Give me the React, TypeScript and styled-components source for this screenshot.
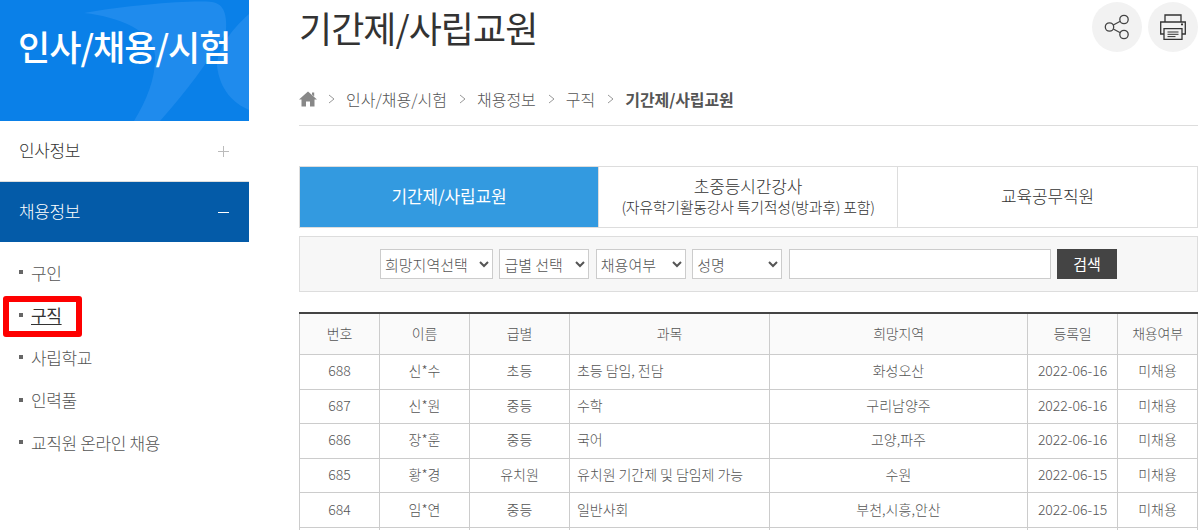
import React from 'react'
import styled, { createGlobalStyle } from 'styled-components'

const GlobalStyle = createGlobalStyle`
  html, body {
    margin: 0;
    padding: 0;
    height: 530px;
    overflow: hidden;
    background: #fff;
  }
  body, select, input, button, table {
    font-family: "Noto Sans CJK KR", "Noto Sans", sans-serif;
  }
`

const Page = styled.div`
  display: flex;
  width: 1204px;
  height: 530px;
  overflow: hidden;
`

const Sidebar = styled.aside`
  position: relative;
  width: 249px;
  flex-shrink: 0;
  margin-right: 50px;
`

const SideHeader = styled.div`
  position: relative;
  height: 121px;
  background: #0a80e8;
  overflow: hidden;
  color: #fff;
  padding: 21px 0 0 18px;
  box-sizing: border-box;
`

const SideSwoosh = styled.svg`
  position: absolute;
  inset: 0;
`

const SideTitle = styled.h2`
  position: relative;
  margin: 0;
  font-size: 35px;
  line-height: 50px;
  font-weight: 500;
  letter-spacing: -1px;
  white-space: nowrap;
`

const MenuItem = styled.div<{ $active?: boolean }>`
  display: flex;
  align-items: center;
  justify-content: space-between;
  box-sizing: border-box;
  height: ${p => (p.$active ? '60px' : '61px')};
  padding: 0 20px 3px 19px;
  font-size: 17px;
  font-weight: 300;
  letter-spacing: -0.4px;
  color: ${p => (p.$active ? '#fff' : '#333')};
  background: ${p => (p.$active ? '#045ba8' : '#fff')};
  border-bottom: ${p => (p.$active ? 'none' : '1px solid #ddd')};

  svg {
    margin-top: 3px;
  }
`

const MenuIcon = styled.svg`
  flex-shrink: 0;
`

const SubList = styled.ul`
  list-style: none;
  margin: 0;
  padding: 9px 0 0 19px;
`

const SubItem = styled.li<{ $current?: boolean }>`
  display: flex;
  align-items: center;
  gap: 8px;
  height: 42.5px;
  font-size: 17px;
  font-weight: ${p => (p.$current ? 400 : 300)};
  letter-spacing: -0.35px;
  color: ${p => (p.$current ? '#333' : '#555')};

  &::before {
    content: '';
    width: 4px;
    height: 4px;
    background: #666;
    flex-shrink: 0;
  }

  span {
    text-decoration: ${p => (p.$current ? 'underline' : 'none')};
    text-underline-offset: 2px;
  }
`

const Highlight = styled.div`
  position: absolute;
  left: 3px;
  top: 296px;
  width: 79px;
  height: 41px;
  box-sizing: border-box;
  border: 6px solid #fe0000;
  border-radius: 3px;
`

const Main = styled.main`
  width: 899px;
  flex-shrink: 0;
`

const TitleRow = styled.div`
  display: flex;
  justify-content: space-between;
  height: 76px;
`

const PageTitle = styled.h1`
  margin: 0;
  font-size: 36px;
  line-height: 54px;
  font-weight: 400;
  letter-spacing: -0.95px;
  color: #333;
`

const RoundButtons = styled.div`
  display: flex;
  gap: 6px;
  padding-top: 2px;
`

const RoundButton = styled.button`
  width: 50px;
  height: 50px;
  border: 0;
  padding: 0;
  border-radius: 50%;
  background: #f2f2f2;
  display: flex;
  align-items: center;
  justify-content: center;
`

const Breadcrumb = styled.nav`
  display: flex;
  align-items: center;
  height: 50px;
  box-sizing: border-box;
  padding-bottom: 3px;
  border-bottom: 1px solid #ddd;
  font-size: 16px;
  font-weight: 300;
  color: #555;
  margin-bottom: 40px;
`

const HomeIcon = styled.svg`
  margin-right: -1px;
  flex-shrink: 0;
`

const Crumb = styled.span<{ $current?: boolean }>`
  font-weight: ${p => (p.$current ? 700 : 300)};
  letter-spacing: ${p => (p.$current ? '-0.1px' : '0')};
  color: #555;
`

const CrumbArrow = styled.svg`
  margin: 0 11px 0 12px;
  flex-shrink: 0;
`

const Tabs = styled.div`
  display: grid;
  grid-template-columns: 298px 299px 1fr;
  height: 62px;
  box-sizing: border-box;
  border: 1px solid #ddd;
  margin-bottom: 8px;
`

const Tab = styled.div<{ $active?: boolean }>`
  display: flex;
  flex-direction: column;
  align-items: center;
  justify-content: center;
  box-sizing: border-box;
  padding-bottom: 2px;
  text-align: center;
  font-size: 17px;
  font-weight: ${p => (p.$active ? 400 : 300)};
  line-height: 22px;
  letter-spacing: -0.15px;
  color: ${p => (p.$active ? '#fff' : '#333')};
  background: ${p => (p.$active ? '#339ae0' : '#fff')};
  border-left: ${p => (p.$active ? '0' : '1px solid #ddd')};

  small {
    font-size: 15px;
    letter-spacing: -0.3px;
    line-height: 20px;
  }
`

const SearchBar = styled.form`
  display: flex;
  align-items: center;
  justify-content: center;
  gap: 6.4px;
  height: 56px;
  box-sizing: border-box;
  border: 1px solid #ddd;
  background: #f7f7f7;
  margin: 0 0 20px;
`

const Select = styled.select<{ $width: number }>`
  width: ${p => p.$width}px;
  height: 30px;
  box-sizing: border-box;
  border: 1px solid #ccc;
  border-radius: 0;
  background: #fff;
  color: #555;
  font-size: 15px;
  font-weight: 300;
  padding: 0;
`

const SearchInput = styled.input`
  width: 262px;
  height: 30px;
  box-sizing: border-box;
  border: 1px solid #ccc;
  background: #fff;
`

const SearchButton = styled.button`
  width: 60px;
  height: 30px;
  border: 0;
  background: #444;
  color: #fff;
  font-size: 15px;
  padding: 0 0 2px;
`

const Table = styled.table`
  width: 899px;
  table-layout: fixed;
  border-collapse: collapse;
  border-top: 2px solid #444;
  font-size: 14px;
  font-weight: 300;
  color: #555;

  th, td {
    border: 1px solid #ccc;
    text-align: center;
    padding: 0 0 3px;
  }

  thead tr:first-child th {
    border-top: 0;
  }

  th {
    height: 37px;
    font-weight: 300;
    background: #fafafa;
    letter-spacing: -0.2px;
  }

  td {
    height: 30.6px;
  }
`

const SubjectCell = styled.td`
  && {
    text-align: left;
    padding-left: 7px;
    letter-spacing: -0.05px;
  }
`

const columns = [80, 90, 100, 200, 258, 90, 80]
const headers = ['번호', '이름', '급별', '과목', '희망지역', '등록일', '채용여부']
const rows = [
  ['688', '신*수', '초등', '초등 담임, 전담', '화성오산', '2022-06-16', '미채용'],
  ['687', '신*원', '중등', '수학', '구리남양주', '2022-06-16', '미채용'],
  ['686', '장*훈', '중등', '국어', '고양,파주', '2022-06-16', '미채용'],
  ['685', '황*경', '유치원', '유치원 기간제 및 담임제 가능', '수원', '2022-06-15', '미채용'],
  ['684', '임*연', '중등', '일반사회', '부천,시흥,안산', '2022-06-15', '미채용'],
  ['', '', '', '', '', '', ''],
]

function Arrow() {
  return (
    <CrumbArrow width="7" height="10" viewBox="0 0 7 10" fill="none">
      <path d="M1 1l5 4-5 4" stroke="#999" strokeWidth="1" />
    </CrumbArrow>
  )
}

export default function App() {
  return (
    <Page>
      <GlobalStyle />
      <Sidebar>
        <SideHeader>
          <SideSwoosh width="249" height="121" viewBox="0 0 249 121">
            <path
              d="M84 13C130 5 190 0 212 2c13 2 15 14 14 30-18 30-40 60-66 89h-26c12-20 22-42 21-66-2-24-35-38-71-42z"
              fill="#1f8bed"
            />
            <path d="M249 14c-20 18-32 36-32 52 3 24 16 37 32 44z" fill="#1f8bed" />
          </SideSwoosh>
          <SideTitle>인사/채용/시험</SideTitle>
        </SideHeader>
        <MenuItem>
          인사정보
          <MenuIcon width="11" height="11" viewBox="0 0 11 11">
            <path d="M5.5 0v11M0 5.5h11" stroke="#bbb" strokeWidth="1" />
          </MenuIcon>
        </MenuItem>
        <MenuItem $active>
          채용정보
          <MenuIcon width="11" height="11" viewBox="0 0 11 11">
            <path d="M0 5.500h11" stroke="#fff" strokeWidth="1" />
          </MenuIcon>
        </MenuItem>
        <SubList>
          <SubItem><span>구인</span></SubItem>
          <SubItem $current><span>구직</span></SubItem>
          <SubItem><span>사립학교</span></SubItem>
          <SubItem><span>인력풀</span></SubItem>
          <SubItem><span>교직원 온라인 채용</span></SubItem>
        </SubList>
        <Highlight />
      </Sidebar>
      <Main>
        <TitleRow>
          <PageTitle>기간제/사립교원</PageTitle>
          <RoundButtons>
            <RoundButton aria-label="공유">
              <svg width="26" height="26" viewBox="0 0 26 26" fill="none" stroke="#444" strokeWidth="1.3">
                <circle cx="5.5" cy="13" r="4.2" />
                <circle cx="20" cy="5.5" r="4.2" />
                <circle cx="20" cy="20.5" r="4.2" />
                <path d="M9.3 11l7-3.8M9.3 15l7 3.8" />
              </svg>
            </RoundButton>
            <RoundButton aria-label="인쇄">
              <svg width="28" height="26" viewBox="0 0 28 26" fill="none" stroke="#333" strokeWidth="1.3">
                <path d="M6 8V1h16v7" />
                <path d="M5 20H1.700V8h24.600v12H23" />
                <path d="M5 14.700h18v10.600H5z" />
                <path d="M8.500 18h11M8.500 20.300h11M8.500 22.600h8" strokeWidth="1" />
                <path d="M22 10.300h2" strokeWidth="1.800" />
              </svg>
            </RoundButton>
          </RoundButtons>
        </TitleRow>
        <Breadcrumb>
          <HomeIcon width="18" height="16" viewBox="0 0 18 16" fill="#888">
            <path d="M9 0.500L18 8.500H15.500V15.500H11V10.500H7V15.500H2.500V8.500H0zM13 1.500h2.200v4L13 3.500z" />
          </HomeIcon>
          <Arrow />
          <Crumb>인사/채용/시험</Crumb>
          <Arrow />
          <Crumb>채용정보</Crumb>
          <Arrow />
          <Crumb>구직</Crumb>
          <Arrow />
          <Crumb $current>기간제/사립교원</Crumb>
        </Breadcrumb>
        <Tabs>
          <Tab $active>기간제/사립교원</Tab>
          <Tab>
            초중등시간강사
            <small>(자유학기활동강사 특기적성(방과후) 포함)</small>
          </Tab>
          <Tab>교육공무직원</Tab>
        </Tabs>
        <SearchBar>
          <Select $width={113}><option>희망지역선택</option></Select>
          <Select $width={90}><option>급별 선택</option></Select>
          <Select $width={90}><option>채용여부</option></Select>
          <Select $width={90}><option>성명</option></Select>
          <SearchInput />
          <SearchButton type="button">검색</SearchButton>
        </SearchBar>
        <Table>
          <colgroup>
            {columns.map((w, i) => <col key={i} style={{ width: w }} />)}
          </colgroup>
          <thead>
            <tr>{headers.map(h => <th key={h}>{h}</th>)}</tr>
          </thead>
          <tbody>
            {rows.map((r, i) => (
              <tr key={i}>
                <td>{r[0]}</td>
                <td>{r[1]}</td>
                <td>{r[2]}</td>
                <SubjectCell>{r[3]}</SubjectCell>
                <td>{r[4]}</td>
                <td>{r[5]}</td>
                <td>{r[6]}</td>
              </tr>
            ))}
          </tbody>
        </Table>
      </Main>
    </Page>
  )
}
